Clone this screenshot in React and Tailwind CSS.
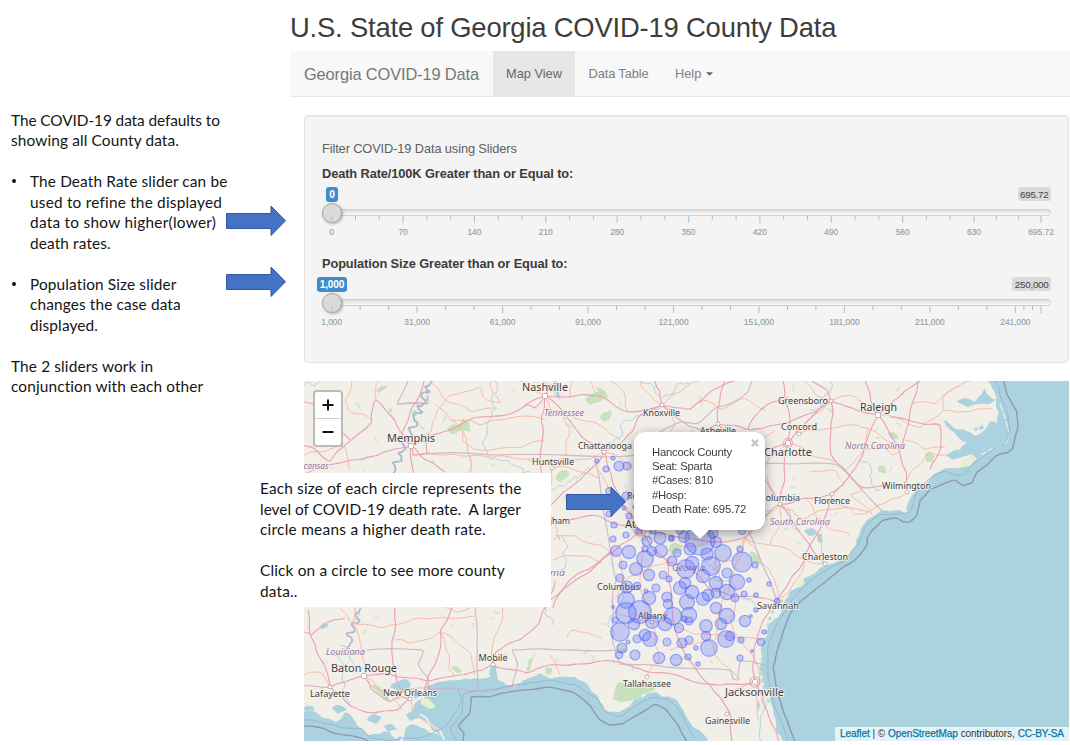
import React from "react";

/* ---------- helpers for hand-plotted map geometry ---------- */

function makeRandom(seed) {
  let s = seed;
  return () => {
    s = (s * 16807) % 2147483647;
    return s / 2147483647;
  };
}

// Turns "x,y x,y ..." into a slightly irregular line, like surveyed geography.
function rough(points, amount = 0.12, depth = 2, seed = 11) {
  let pts = points.trim().split(/\s+/).map((p) => p.split(",").map(Number));
  const rnd = makeRandom(seed + pts.length * 97 + Math.round(pts[0][0] * 13 + pts[0][1]));
  for (let d = 0; d < depth; d++) {
    const next = [pts[0]];
    for (let i = 1; i < pts.length; i++) {
      const [ax, ay] = pts[i - 1];
      const [bx, by] = pts[i];
      const k = (rnd() - 0.5) * 2 * amount;
      next.push([(ax + bx) / 2 - (by - ay) * k, (ay + by) / 2 + (bx - ax) * k]);
      next.push([bx, by]);
    }
    pts = next;
  }
  let d = `M${pts[0][0].toFixed(1)} ${pts[0][1].toFixed(1)}`;
  for (let i = 1; i < pts.length - 1; i++) {
    const mx = (pts[i][0] + pts[i + 1][0]) / 2;
    const my = (pts[i][1] + pts[i + 1][1]) / 2;
    d += `Q${pts[i][0].toFixed(1)} ${pts[i][1].toFixed(1)} ${mx.toFixed(1)} ${my.toFixed(1)}`;
  }
  const last = pts[pts.length - 1];
  return d + `L${last[0].toFixed(1)} ${last[1].toFixed(1)}`;
}

/* ---------- map data ---------- */

const ATLANTIC =
  "988,381 992,388 996,396 996,404 999,414 998,424 990,421 985,430 973,435 965,430 953,427 943,420 950,430 958,437 967,442 960,450 945,455 952,460 965,456 974,454 965,465 947,468 933,474 923,485 915,492 909,502 907,514 900,510 880,511 867,520 860,532 855,547 843,558 827,565 816,572 806,577 800,587 790,591 785,600 782,612 773,620 767,630 763,642 762,655 759,668 764,680 770,700 776,720 783,742";

const GULF =
  "303,712 320,716 335,722 345,712 358,727 368,736 390,732 396,740 404,735 412,724 424,728 440,735 448,742 440,735 428,722 412,714 414,704 432,694 425,687 432,685 450,680 465,678 480,679 491,677 492,666 497,666 498,680 506,685 520,684 528,678 540,673 550,679 568,677 582,681 596,694 603,705 608,712 627,708 643,698 655,692 668,696 681,707 690,722 707,738 708,742";

const TRUNKS = [
  "304,475 330,465 344,462 375,456 394,449 411,446 440,433 460,425 480,417 515,412 545,396 570,397 600,396 628,412 662,405 690,410 712,390 735,381",
  "304,446 315,449 330,462 350,441 372,422 374,402 376,400 395,420 411,446",
  "424,381 410,410 402,434 411,446 413,470 414,478",
  "411,446 420,455 435,464 445,472",
  "545,396 541,420 542,445 540,462 543,500 548,520",
  "545,396 535,408 525,404",
  "545,396 552,385 556,381",
  "545,396 565,415 585,440 604,452",
  "604,452 618,445 632,432 640,415 662,405",
  "662,405 660,392 655,381",
  "604,452 607,465 612,480 622,505 640,530 652,550 668,562 671,590 673,620 679,640 690,660 710,685 722,700 731,715 732,742",
  "604,452 590,470 570,488 550,505 540,524 520,545",
  "540,524 570,520 600,516 640,530 670,535 710,542 745,538 762,520 780,504 805,498 832,494",
  "640,530 662,510 690,485 725,462 750,453 788,443 808,420 831,401 850,407 878,415 892,402 905,391 920,381",
  "640,530 620,545 600,562 575,580 550,600 540,622 520,640 495,652 493,664",
  "668,562 695,572 710,590 735,597 777,602",
  "755,682 754,660 755,645 763,620 777,602 790,580 805,560 820,530 832,494 848,478 863,455 878,415",
  "825,564 810,545 795,525 780,504 765,480 750,455 735,440 718,424",
  "780,504 785,480 788,443 790,420 785,400 783,381",
  "831,401 828,390 812,381",
  "831,401 831,430 831,455 845,470 863,488 900,488",
  "878,415 888,430 900,455 907,475 907,492",
  "718,424 700,430 680,420 662,405",
  "718,424 748,430 775,425 800,417 831,401",
  "718,424 719,405 724,381",
  "755,682 730,684 710,684 680,676 647,672 625,664 600,661 575,664 550,665 527,673 510,669 493,665 470,673 450,677 430,681 410,678 390,674 364,676 345,682 330,687 304,686",
  "364,676 372,690 390,702 400,696 410,699 398,710 370,713 350,706 330,687 326,670 318,655 310,633 308,610",
  "304,632 312,635 325,623 345,618",
  "395,608 392,640 393,665 397,683 410,699",
  "452,608 440,630 440,650 430,672 424,690",
  "755,682 762,700 770,720 779,742",
  "865,381 870,394 878,415",
  "890,417 910,421 940,424 941,447 930,469",
  "918,381 912,404 906,430 902,450",
  "304,402 315,405 325,418 340,430 350,440",
  "555,581 551,594",
  "553,608 562,590 580,572 610,552",
  "748,430 755,416 770,403 788,397",
];

const PRIMARIES = [
  "376,400 376,385 380,381",
  "436,405 450,420 465,435 471,460 474,480",
  "429,381 445,400 470,412 495,408",
  "411,446 432,432 437,410 450,395 480,386 486,400 500,402",
  "500,402 490,381",
  "450,420 480,426 510,418 545,420",
  "415,455 440,455 470,456 500,455 540,462 575,460 604,452",
  "460,425 462,440 478,450 520,448 545,440",
  "470,456 470,470 462,480",
  "304,455 325,452 345,446 350,470",
  "352,381 345,400 350,412 372,420",
  "545,396 530,385 520,381",
  "545,396 550,410 575,418 600,425 620,440",
  "570,397 572,381",
  "566,455 570,430 560,410",
  "600,396 590,381",
  "628,412 625,395 610,381",
  "552,468 548,490 552,520 560,540",
  "552,468 580,472 600,478",
  "604,452 630,465 645,480 640,500 640,530",
  "662,405 675,425 660,450 640,465",
  "662,405 680,392 700,381",
  "662,405 650,395 640,381",
  "690,410 705,400 720,410 745,398 765,410",
  "735,440 755,445 775,430",
  "640,530 630,510 610,492 598,470",
  "553,540 575,535 600,545 620,555 622,585",
  "553,560 580,556 600,562",
  "622,585 640,572 668,562",
  "622,585 612,600 618,615 652,622 670,612",
  "652,622 655,645 660,660 647,675",
  "652,622 680,628 710,635 735,638 762,640",
  "640,530 642,555 640,580 648,605 652,622",
  "668,562 680,545 710,542",
  "710,542 715,565 725,590 720,610 715,640",
  "745,538 735,565 728,592",
  "745,538 760,560 775,580 777,602",
  "735,597 730,620 740,640 755,660",
  "670,650 690,645 710,640 715,655 740,680",
  "788,443 770,455 765,475 740,480 725,460",
  "788,443 810,455 835,462",
  "799,434 820,430 845,425 868,428 900,450",
  "868,428 860,455 845,470",
  "831,401 812,415 800,430",
  "831,401 850,395 862,402 878,415",
  "804,381 815,395 831,401",
  "878,415 895,417 920,428 930,420 943,410 970,412 992,409",
  "912,404 935,404 955,388 970,381",
  "943,410 945,395 960,386",
  "905,440 925,450 945,447",
  "867,450 880,446 892,455 905,445",
  "863,488 850,495 870,510 872,515",
  "907,492 890,500 870,511 855,515 850,508 835,505",
  "832,494 845,485 835,470 810,472",
  "805,498 815,515 830,530 850,535",
  "780,504 800,520 820,510 870,512",
  "780,504 765,515 745,510 740,495 720,490",
  "825,564 822,545 815,530",
  "825,564 805,560 790,550 770,545 745,538",
  "780,504 778,530 770,545",
  "805,560 800,575 790,590 780,598",
  "355,608 352,622 360,640 363,660 364,676",
  "340,608 350,622 380,628 400,624 435,618 475,616",
  "395,640 410,643 425,640 440,632 460,645 472,655 475,675",
  "440,632 446,650 449,670 455,676",
  "448,608 455,612 470,608",
  "503,608 500,625 494,640 493,664",
  "567,638 572,630 585,632 600,638 602,637",
  "550,655 556,667 560,675",
  "364,676 380,690 402,710",
  "410,699 412,712 425,722 439,731",
  "304,675 320,672 330,687",
  "398,700 405,690 425,688",
  "755,660 757,700 758,720",
  "722,700 735,690 755,682",
  "712,570 735,560 745,538",
  "640,530 655,520 665,505 660,490 645,480",
  "725,462 710,475 700,500 705,520 710,542",
  "765,475 770,490 780,504",
  "945,455 930,452 915,468 907,480",
];

const BORDERS = [
  "427,454 500,455 560,455 660,455",
  "594,455 603,510 612,558 616,580 612,600 612,640 619,663",
  "619,664 680,668 731,670 733,679 738,680 740,661 750,661 765,665",
  "475,607 477,640 478,689",
  "512,650 560,650 619,650",
  "367,650 424,650 418,665 428,678 429,690",
  "760,464 793,464 837,464 882,511",
  "660,455 690,450 725,445 745,450",
  "660,432 680,422 697,424 715,408 735,402 748,392 752,381",
  "690,455 712,475 730,500 748,530 760,558 770,580 777,600",
  "397,404 425,403 428,395 428,404 397,404 405,388 408,381",
  "475,607 475,600",
  "512,650 518,665 512,688",
  "424,690 450,688 470,691 500,689 520,684",
];

const RIVERS = [
  "492,381 498,390 490,400 497,408 489,420 486,450 490,460 515,465 535,475",
  "604,452 615,440 628,420 645,415 660,408",
  "540,500 560,485 575,476 590,468",
  "543,381 556,395 560,400",
  "640,381 655,392 672,395 690,384",
  "680,440 690,448 705,450",
  "745,480 755,495 770,510",
  "780,504 790,520 800,530",
  "830,381 825,395 810,410",
  "860,460 870,475 880,490",
  "620,585 616,610 612,640",
  "555,535 565,550 560,570",
  "304,385 315,387 320,381",
  "332,655 342,680 350,705",
  "340,645 350,660 370,670",
  "700,560 715,580 735,590 755,605",
  "553,625 550,600",
  "758,690 760,720 764,742",
  "648,520 640,540",
];

const MISSISSIPPI =
  "432,381 425,386 430,392 421,396 426,403 417,405 423,412 413,416 418,424 408,428 413,436 402,441 406,449 398,453 402,461 392,463 396,470 389,476";
const MISSISSIPPI_LOWER = "361,608 355,614 360,620 351,624 355,632 346,634 352,642 346,650";

const FORESTS = [
  "447,428 460,424 463,418 470,424 472,432 460,430 450,434",
  "376,390 388,386 386,389 378,393",
  "615,690 620,682 640,683 655,683 655,690 640,694 620,702 613,699",
  "670,545 676,543 682,546 681,553 674,555 668,551",
  "925,454 930,452 935,457 933,464 926,462",
  "888,433 898,435 899,439 890,438",
  "878,467 885,466 886,474 879,473",
  "585,400 600,392 604,396 590,405",
  "595,386 608,398 603,399",
  "555,478 566,470 570,473 560,483",
  "750,552 760,558 762,566 753,562",
  "617,690 640,688 642,700 620,702",
  "620,650 625,648 627,652 621,655",
  "545,669 552,668 551,675 546,674",
  "370,685 382,690 390,702 384,698",
  "388,410 391,408 392,413",
  "411,412 416,410 417,416 412,416",
  "735,470 742,468 744,474 736,474",
  "600,418 610,410 612,414 604,422",
  "420,700 433,702 438,710 425,708",
  "535,652 528,660 526,670 529,672",
  "451,668 456,666 462,672 457,673",
];

const LAKES = [
  "390,687 396,682 405,679 411,684 408,690 398,691",
  "804,531 811,528 817,534 809,536",
  "817,535 822,534 823,541 818,542",
  "979,427 983,425 984,429 980,430",
  "974,429 977,427 978,430 975,431",
  "957,402 966,398 974,402 981,395 985,388 989,396 996,400 988,404 976,404 968,407",
  "304,707 312,706 315,711 305,712",
  "332,708 340,705 347,710 338,714",
  "367,720 374,713 382,717 376,724",
  "384,727 392,724 398,729 389,732",
  "410,690 416,690 422,694 415,699",
  "406,715 414,711 420,718 410,721",
  "320,628 327,623 328,626 322,629",
  "757,700 760,706 758,711",
  "555,386 560,396 557,398",
];

// One entry per county: x, y, radius.
const COUNTIES = [
  [614, 525, 3], [626, 535, 3], [639, 531, 3], [653, 531, 3], [613, 539, 3], [647, 541, 5], [660, 538, 6],
  [671.3, 538.3, 3], [671.3, 538.3, 2], [680, 530, 4], [684, 537, 5.5], [700, 540, 15], [713, 533, 5], [716, 542, 5.5],
  [742, 531, 3.5], [740, 549, 3], [616, 551, 5.5], [629, 552, 6.7], [645, 549, 3], [645, 559, 8.3], [652, 551, 4.7],
  [661, 551, 6.5], [677, 553, 4], [690, 549, 6], [707, 554, 6], [723, 553, 8.3], [742, 562, 10], [755, 565, 3],
  [623, 565, 4], [636, 569, 6.5], [649, 575, 5.7], [672, 561, 5], [692, 563, 6.7], [686, 569, 9.3], [711, 566, 9.3],
  [703, 576, 6.7], [727, 573, 5], [663, 575, 4], [669, 579, 3], [620, 578, 4], [627, 587, 6], [637, 586, 3.7],
  [656, 588, 4], [646, 591, 2], [685, 583, 5.7], [680, 588, 6.5], [692, 592, 6.7], [716, 583, 6.7], [737, 582, 7.7],
  [749, 580, 2.2], [769, 584, 2.2], [727, 592, 7.7], [744, 594, 3], [756, 595, 2.2], [735, 598, 4], [708, 595, 5.7],
  [703, 599, 6.5], [716, 593, 5], [626, 600, 8.3], [649, 598, 6.7], [667, 597, 5], [668, 604, 4.7], [687, 602, 7.5],
  [716, 608, 5.7], [613, 607, 1.3], [626, 613, 10.3], [640, 612, 11.3], [756, 610, 2.2], [751, 616, 1.3], [615, 620, 3],
  [634, 624, 5.7], [652, 622, 6.5], [665, 624, 6.7], [673, 616, 8.7], [689, 615, 7.7], [684, 619, 3], [689, 621, 4],
  [727, 616, 7.7], [721, 624, 5.7], [745, 621, 5.7], [706, 626, 6.3], [679, 628, 4.7], [620, 632, 9.3], [764, 632, 2.2],
  [706, 636, 4.7], [645, 635, 5.7], [650, 639, 7.5], [637, 639, 4], [628, 642, 2], [667, 642, 4], [682, 643, 5],
  [689, 640, 4], [696, 648, 2.2], [709, 648, 8.3], [726, 639, 8.3], [730, 636, 4.7], [741, 640, 3], [761, 642, 3.7],
  [752, 651, 1.3], [622, 648, 5], [619, 655, 3.7], [635, 655, 5], [659, 658, 5.7], [676, 660, 5.7], [688, 657, 3],
  [698, 664, 2.2], [740, 658, 3], [777, 601, 2.7], [597, 461, 2], [613, 458, 2], [606, 469, 3], [619, 466, 5],
  [627, 466, 4], [609, 491, 3.3], [626, 496, 4], [624, 508, 2], [609, 514, 3], [629, 516, 3], [635, 507, 2],
];

const CITIES = [
  // name, text x, baseline y, rendered width, size, marker x, marker y
  ["Nashville", 522, 391, 46, 10.5, 545, 396],
  ["Memphis", 387, 442, 48, 10.5, 411, 446],
  ["Knoxville", 643, 416, 37, 9, 662, 405],
  ["Asheville", 700, 434, 36, 9, 718, 424],
  ["Chattanooga", 578, 448.5, 54, 9, 604, 452],
  ["Huntsville", 532, 464.5, 42, 9, 552, 468],
  ["Greensboro", 778, 403.5, 50, 9, 831, 401],
  ["Raleigh", 860, 411, 37, 10.5, 878, 415],
  ["Concord", 781, 430, 36, 9, 799, 434],
  ["Charlotte", 764, 455.5, 48, 10.5, 788, 443],
  ["Wilmington", 882, 489, 49, 9, 907, 492],
  ["Florence", 814, 504, 36, 9, 832, 494],
  ["Columbia", 760, 500.5, 40, 9, 780, 504],
  ["Charleston", 802, 560, 46, 9, 825, 564],
  ["Savannah", 757, 608.5, 42, 9, null, null],
  ["Columbus", 597, 590, 43, 9, null, null],
  ["Albany", 638, 618.5, 29, 9, 652, 622],
  ["Atlanta", 625, 528, 37, 10.5, null, null],
  ["Rome", 627, 499, 24, 9, null, null],
  ["Birmingham", 520, 524, 50, 9, null, null],
  ["Mobile", 478.5, 660.5, 29, 9, 493, 664.5],
  ["Baton Rouge", 331, 671.5, 66, 10.5, 364, 676],
  ["Lafayette", 310, 697, 40, 9, 330, 687],
  ["New Orleans", 383, 696, 54, 9, 410, 699],
  ["Tallahassee", 623, 687, 48, 9, 647, 677],
  ["Jacksonville", 725, 696, 59, 10.5, 755, 682],
  ["Gainesville", 705, 724, 45, 9, 727, 714],
];

const STATES = [
  ["Tennessee", 544, 415.5, 40],
  ["cansas", 303.5, 469, 25],
  ["Alabama", 523, 576, 42],
  ["Georgia", 672, 571, 33],
  ["North Carolina", 845, 448.5, 60],
  ["South Carolina", 770, 525, 60],
  ["Louisiana", 326, 655, 39],
];

function Specks() {
  const rnd = makeRandom(4242);
  const items = [];
  for (let i = 0; i < 150; i++) {
    const x = 306 + rnd() * 600;
    const y = 383 + rnd() * 285;
    const green = rnd() > 0.62;
    const len = 1 + rnd() * 4;
    const a = rnd() * Math.PI;
    if (x + y * 0.9 > 1330) continue;
    items.push(
      <path
        key={i}
        d={`M${x.toFixed(1)} ${y.toFixed(1)}q${(Math.cos(a) * len).toFixed(1)} ${(Math.sin(a) * len).toFixed(1)} ${(
          Math.cos(a + 0.6) * len * 1.5
        ).toFixed(1)} ${(Math.sin(a + 0.6) * len * 1.5).toFixed(1)}`}
        stroke={green ? "#c8e2bd" : "#b4dae3"}
        strokeWidth={green ? 1.8 : 1}
        opacity="0.7"
      />
    );
  }
  return <g fill="none">{items}</g>;
}

function GeorgiaMap() {
  return (
    <svg viewBox="304 381 765 360" className="block h-[360px] w-[765px]">
      <rect x="304" y="381" width="765" height="360" fill="#f2efe9" />
      <Specks />
      <g fill="#bfdfb4" opacity="0.85">
        {FORESTS.map((p) => (
          <path key={p} d={rough(p, 0.2) + "Z"} />
        ))}
      </g>

      <path d={rough(ATLANTIC, 0.16) + "L1070 742L1070 380L988 380Z"} fill="#aad3df" />
      <path d={rough(GULF, 0.2) + "L303 742Z"} fill="#aad3df" />
      <g fill="#aad3df">
        {LAKES.map((p) => (
          <path key={p} d={rough(p, 0.15) + "Z"} />
        ))}
      </g>
      <g fill="#e6efd2">
        <path d="M972 455l5 3-7 8-12 2 4-7z" />
        <path d="M421 697l8 2 7 8-6 2-9-5z" />
        <path d="M799 578l6 4-3 5-5-2z" />
      </g>
      <g fill="none" stroke="#f2efe9" strokeWidth="1.2">
        <path d="M1000 404l5 14 4 15-2 9-12 5-14 8" strokeDasharray="7 2" />
        <path d={rough("401,722 404,730 401,742", 0.2)} strokeWidth="3" />
        <path d={rough("420,714 430,724 440,731 444,740", 0.2)} strokeWidth="2" />
      </g>

      <g fill="none" stroke="#a9d6e0" strokeWidth="1">
        {RIVERS.map((p) => (
          <path key={p} d={rough(p, 0.32, 3)} />
        ))}
        <path d="M783 600q-12 10-15 25t-6 35 8 45" stroke="#b5dccb" strokeDasharray="4 3" strokeWidth="2.5" />
      </g>
      <g fill="none" strokeLinejoin="round">
        <path d={rough(MISSISSIPPI, 0.25)} stroke="#a9b9cf" strokeWidth="1.9" />
        <path d={rough(MISSISSIPPI_LOWER, 0.25)} stroke="#b6bace" strokeWidth="1.9" />
      </g>

      <g fill="none" stroke="#f9bba5" strokeWidth="1" strokeLinejoin="round">
        {PRIMARIES.map((p) => (
          <path key={p} d={rough(p, 0.12)} />
        ))}
      </g>
      <g fill="none" stroke="#ec9fb3" strokeWidth="1.1" strokeLinejoin="round">
        {TRUNKS.map((p) => (
          <path key={p} d={rough(p, 0.08)} />
        ))}
        <circle cx="640" cy="530" r="6" />
        <circle cx="755" cy="682" r="5" />
        <circle cx="788" cy="443" r="4.5" />
        <path d="M411 440l15 2 1 12-14 1z" />
      </g>
      <g fill="none" stroke="#c9b3c6" strokeWidth="1.3" strokeLinejoin="round" opacity="0.8">
        {BORDERS.map((p) => (
          <path key={p} d={rough(p, 0.03)} />
        ))}
      </g>

      <g fill="none" strokeLinejoin="round">
        <path
          d={rough("996,381 1001,398 1008,415 1010,430 1006,443 995,447 976,462 963,476 945,471 928,480 915,496 910,512 900,514 880,514 865,526 858,545 844,561 825,571 808,583 797,594 786,610 776,625 768,645 768,670 772,695 780,720 788,742", 0.06)}
          stroke="#9db5cb"
          strokeWidth="1"
        />
        <path
          d={rough("1003,381 1007,395 1017,412 1018,428 1013,448 1007,453 997,455 977,472 972,483 963,486 955,480 947,482 930,490 920,500 917,515 910,522 903,522 897,518 883,520 872,530 867,538 867,545 853,562 830,578 817,588 800,602 789,616 783,632 777,652 773,667 775,680 780,700 787,720 795,742", 0.05)}
          stroke="#9496b4"
          strokeWidth="1.4"
        />
        <path
          d={rough("304,720 325,724 345,728 360,728 370,738 390,741 420,738 445,728 455,712 462,700 458,690", 0.08)}
          stroke="#9db5cb"
          strokeWidth="1"
        />
        <path d={rough("304,726 323,728 333,733 357,737 370,742", 0.05)} stroke="#9496b4" strokeWidth="1.4" />
        <path
          d={rough("463,742 464,733 458,726 470,713 471,697 490,697 523,690 550,687 573,692 590,705 600,720 610,725 623,724 643,712 655,704 667,710 677,723 687,742", 0.04)}
          stroke="#9496b4"
          strokeWidth="1.4"
        />
        <path
          d={rough("457,742 450,728 462,714 463,694 490,691 525,684 552,680 576,685 597,698 605,712 620,717 640,703 655,697 672,702 685,721 695,738", 0.06)}
          stroke="#9db5cb"
          strokeWidth="1"
        />
      </g>

      <g fontFamily="'Noto Sans', sans-serif" paintOrder="stroke" strokeLinejoin="round">
        {STATES.map(([name, x, y, w]) => (
          <text key={name} x={x} y={y} textLength={w} lengthAdjust="spacingAndGlyphs" fontSize="8.6" fontStyle="italic" fill="#95739c" stroke="#f6f3f0" strokeWidth="1.4">
            {name}
          </text>
        ))}
        {CITIES.map(([name, x, y, w, size, mx, my]) => (
          <g key={name}>
            {mx !== null && <circle cx={mx} cy={my} r={size > 10 ? 2.5 : 1.8} fill="#fff" stroke="#776f6c" strokeWidth="0.9" />}
            <text x={x} y={y} textLength={w} lengthAdjust="spacingAndGlyphs" fontSize={size} fill="#3d3d3d" stroke="#f6f3f0" strokeWidth="1.6">
              {name}
            </text>
          </g>
        ))}
      </g>

      <g fill="#5468ff" fillOpacity="0.28" stroke="#4a62ff" strokeOpacity="0.5" strokeWidth="1.2">
        {COUNTIES.map(([x, y, r], i) => (
          <circle key={i} cx={x} cy={y} r={r} />
        ))}
      </g>
    </svg>
  );
}

/* ---------- sliders ---------- */

function thirds(values) {
  return values.slice(1).flatMap((v, i) => {
    const a = values[i];
    return [a + (v - a) / 3, a + ((v - a) * 2) / 3];
  });
}

function Slider({ label, min, max, stops, badge, maxBadge, showLast }) {
  const x = (v) => 9.7 + ((v - min) / (max - min)) * 709.3;
  const all = [...stops, max];
  const text = (v) => v.toLocaleString("en-US");
  return (
    <div className="h-[90px]">
      <div className="h-[18px] text-[12.8px] leading-[18px] font-bold tracking-[-0.1px] whitespace-nowrap text-[#3b3b3b]">{label}</div>
      <div className="mt-[4px] flex h-[15px] items-start justify-between">
        <div className="flex w-5 justify-center">
          <span className="h-[15px] rounded-[3px] bg-[#428bca] px-[3px] text-[10.2px] leading-[15px] font-bold tracking-[-0.15px] text-white">{badge}</span>
        </div>
        <span className="h-[14px] rounded-[3px] bg-[#dadada] px-[2.5px] text-[9.8px] leading-[15px] tracking-[-0.25px] text-[#444]">{maxBadge}</span>
      </div>
      <div className="mt-[7px] flex h-[7px] items-center rounded-full border border-[#d0d0d0] bg-linear-to-b from-[#dedede] to-[#fafafa]">
        <div className="-ml-px h-5 w-5 shrink-0 rounded-full border border-[#aaa] bg-[#dadada] shadow-[1px_1px_3px_rgba(0,0,0,0.3)]" />
      </div>
      <svg viewBox="0 0 729 22" className="block h-[22px] w-[729px] overflow-visible">
        {thirds(all).map((v) => (
          <path key={v} d={`M${x(v)} 0v3.5`} stroke="#b5b5b5" strokeWidth="1" />
        ))}
        {all.map((v) => (
          <path key={v} d={`M${x(v)} 0v7`} stroke="#a9cbe5" strokeWidth="1.2" />
        ))}
        {(showLast ? all : stops).map((v) => (
          <text key={v} x={x(v)} y="18.6" textAnchor="middle" fontSize="8.4" fill="#94a0a6" stroke="#94a0a6" strokeWidth="0.15">
            {text(v)}
          </text>
        ))}
      </svg>
    </div>
  );
}

const DEATH_STOPS = [0, 70, 140, 210, 280, 350, 420, 490, 560, 630];
const POPULATION_STOPS = [1000, 31000, 61000, 91000, 121000, 151000, 181000, 211000, 241000];

/* ---------- annotations ---------- */

function Arrow({ className }) {
  return (
    <svg viewBox="0 0 60 32" className={"absolute h-8 w-[60px] " + className}>
      <path d="M0.5 8.5H45V1L59.5 15.8L45 30.5V23.5H0.5Z" fill="#4472c4" stroke="#35599c" strokeWidth="1" />
    </svg>
  );
}

function Bullet() {
  return (
    <span className="flex h-[20.5px] w-[19px] items-center pl-px">
      <span className="h-1 w-1 rounded-full bg-[#151515]" />
    </span>
  );
}

function Notes() {
  return (
    <aside className="w-[290px] shrink-0 pt-[109.5px] pl-[11px] font-['Lato',sans-serif] text-[15.4px] leading-[20.5px] tracking-[0.13px] whitespace-nowrap text-[#151515] [font-variant-ligatures:none]">
      <p>
        <span className="tracking-[-0.08px]">The COVID-19 data defaults to</span>
        <br />
        showing all County data.
      </p>
      <ul className="my-[20.5px] flex flex-col gap-[20.5px]">
        <li className="flex">
          <Bullet />
          <span>The Death Rate slider can be<br /><span className="tracking-[0.2px]">used to refine the displayed</span><br /><span className="tracking-[0.26px]">data to show higher(lower)</span><br />death rates.</span>
        </li>
        <li className="flex">
          <Bullet />
          <span>Population Size slider<br />changes the case data<br />displayed.</span>
        </li>
      </ul>
      <p>The 2 sliders work in<br />conjunction with each other</p>
    </aside>
  );
}

function Popup() {
  return (
    <div className="absolute top-[51px] left-[330px] h-[98px] w-[131px] drop-shadow-[0_3px_6px_rgba(0,0,0,0.35)]">
      <svg viewBox="0 0 20 10" className="absolute top-[97px] left-[56px] h-[10px] w-5">
        <path d="M0 0H20L10 10Z" fill="#fff" />
      </svg>
      <div className="h-full rounded-[11px] bg-white pt-[12.5px] pl-[18px] text-[11.3px] leading-[14.4px] tracking-[-0.22px] whitespace-nowrap text-[#3c3c3c]">
        <p>Hancock County</p>
        <p>Seat: Sparta</p>
        <p>#Cases: 810</p>
        <p>#Hosp:</p>
        <p>Death Rate: 695.72</p>
      </div>
      <svg viewBox="0 0 8 8" className="absolute top-[7px] right-[6px] h-2 w-2">
        <path d="M0.8 0.8L7.2 7.2M7.2 0.8L0.8 7.2" stroke="#c3c3c3" strokeWidth="2.1" />
      </svg>
    </div>
  );
}

export default function App() {
  return (
    <div className="relative flex h-[745px] w-[1070px] overflow-hidden bg-white font-['Liberation_Sans',Arial,sans-serif]">
      <Notes />

      <main className="w-[780px] shrink-0">
        <h1 className="h-[51px] pt-[9px] text-[27.4px] leading-[38px] tracking-[-0.19px] whitespace-nowrap text-[#3d3d3d]">
          U.S. State of Georgia COVID-19 County Data
        </h1>

        <nav className="flex h-[46px] items-stretch border-b border-[#e7e7e7] bg-[#f8f8f8] text-[12.8px] leading-[46px] whitespace-nowrap text-[#808080]">
          <div className="w-[203px] pl-[14px] text-[16.4px] tracking-[-0.13px] text-[#777]">Georgia COVID-19 Data</div>
          <div className="w-[82px] bg-[#e7e7e7] text-center text-[#666]">Map View</div>
          <div className="w-[87px] text-center tracking-[-0.1px]">Data Table</div>
          <div className="flex items-center gap-[5px] pl-[13px]">
            Help
            <svg viewBox="0 0 8 4" className="h-1 w-[7px]">
              <path d="M0 0H8L4 4Z" fill="#666" />
            </svg>
          </div>
        </nav>

        <div className="pt-[18px] pl-[14px]">
          <section className="h-[248px] w-[765px] rounded-[4px] border border-[#e3e3e3] bg-[#f4f4f4] pt-[23px] pl-[17px] shadow-[inset_0_1px_1px_rgba(0,0,0,0.05)]">
            <p className="h-[26px] text-[12.8px] leading-[20px] tracking-[-0.11px] text-[#606060]">Filter COVID-19 Data using Sliders</p>
            <div className="w-[729px]">
              <Slider label="Death Rate/100K Greater than or Equal to:" min={0} max={695.72} stops={DEATH_STOPS} badge="0" maxBadge="695.72" showLast />
              <Slider label="Population Size Greater than or Equal to:" min={1000} max={250000} stops={POPULATION_STOPS} badge="1,000" maxBadge="250,000" />
            </div>
          </section>

          <section className="relative mt-[18px] h-[360px] w-[765px]">
            <GeorgiaMap />

            <div className="absolute top-[9px] left-[9px] flex h-[57px] w-[30px] flex-col rounded-[4px] border-2 border-[#bdbab5] bg-white">
              <div className="flex flex-1 items-center justify-center border-b border-[#ccc]">
                <svg viewBox="0 0 12 12" className="h-3 w-3">
                  <path d="M6 0.5V11.5M0.5 6H11.5" stroke="#111" strokeWidth="2" />
                </svg>
              </div>
              <div className="flex flex-1 items-center justify-center">
                <svg viewBox="0 0 12 12" className="h-3 w-3">
                  <path d="M0.5 6H11.5" stroke="#111" strokeWidth="2" />
                </svg>
              </div>
            </div>

            <Popup />

            <div className="absolute right-0 bottom-0 flex h-[14px] w-[234px] items-center justify-center gap-[3px] bg-white/70 text-[10px] leading-[14px] tracking-[-0.08px] whitespace-nowrap text-[#333]">
              <span className="text-[#0078a8] [-webkit-text-stroke:0.25px_#0078a8]">Leaflet</span>
              <span>| ©</span>
              <span className="text-[#0078a8] [-webkit-text-stroke:0.25px_#0078a8]">OpenStreetMap</span>
              <span>contributors,</span>
              <span className="text-[#0078a8] [-webkit-text-stroke:0.25px_#0078a8]">CC-BY-SA</span>
            </div>
          </section>
        </div>
      </main>

      <div className="absolute top-[473px] left-[251px] h-[134px] w-[300px] bg-white pt-[5px] pl-[9px] font-['Lato',sans-serif] text-[15.4px] leading-[20.5px] tracking-[0.16px] whitespace-pre text-[#151515] [font-variant-ligatures:none]">
        <p>Each size of each circle represents the</p>
        <p className="tracking-[0px]">{"level of COVID-19 death rate.  A larger"}</p>
        <p className="tracking-[0.26px]">circle means a higher death rate.</p>
        <p className="mt-[20.5px]">{"Click on a circle to see more county\ndata.."}</p>
      </div>

      <Arrow className="top-[205px] left-[226px]" />
      <Arrow className="top-[266px] left-[226px]" />
      <Arrow className="top-[486px] left-[566px]" />
    </div>
  );
}
